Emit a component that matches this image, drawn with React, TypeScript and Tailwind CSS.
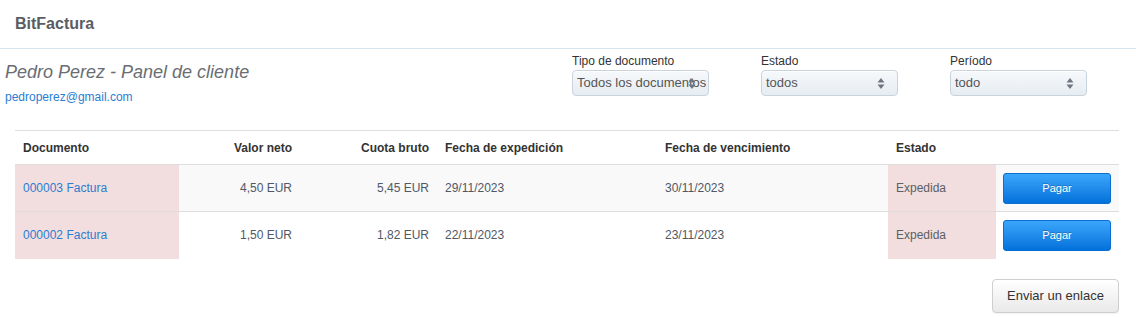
import type { ReactNode } from "react";

const filters = [
    { label: "Tipo de documento", value: "Todos los documentos" },
    { label: "Estado", value: "todos" },
    { label: "Período", value: "todo" },
];

const rows = [
    { doc: "000003 Factura", neto: "4,50 EUR", bruto: "5,45 EUR", exp: "29/11/2023", venc: "30/11/2023", estado: "Expedida" },
    { doc: "000002 Factura", neto: "1,50 EUR", bruto: "1,82 EUR", exp: "22/11/2023", venc: "23/11/2023", estado: "Expedida" },
];

function Arrows() {
    return (
        <svg width="8" height="13" viewBox="0 0 8 13" className="shrink-0">
            <path d="M4 1 L7.5 5.5 L0.5 5.5 Z" fill="#707680" />
            <path d="M4 12 L7.5 7.5 L0.5 7.5 Z" fill="#707680" />
        </svg>
    );
}

function Filter({ label, value }: { label: string; value: string }) {
    return (
        <div className="w-[137px]">
            <div className="text-[12px] leading-[14px] text-[#333]">{label}</div>
            <div className="relative mt-[2px] h-[26px] overflow-hidden rounded-[4px] border border-[#c9d3dd] bg-gradient-to-b from-[#f6f9fc] to-[#e6ecf2] pl-[4px] pr-[14px] shadow-[inset_0_1px_0_#fff]">
                <span className="block whitespace-nowrap text-[13px] leading-[24px] text-[#555]">{value}</span>
                <div className="absolute right-[12px] top-[6px]">
                    <Arrows />
                </div>
            </div>
        </div>
    );
}

function Th({ children, className = "" }: { children?: ReactNode; className?: string }) {
    return <th className={`h-[34px] px-[8px] text-left text-[12px] font-bold text-[#333] ${className}`}>{children}</th>;
}

export default function App() {
    return (
        <div className="min-h-[317px] w-[1136px] bg-white font-['Liberation_Sans',Arial,sans-serif]">
            <header className="flex h-[49px] items-center border-b border-[#d5e4ee] pl-[15px]">
                <span className="text-[16px] font-bold text-[#5a5d63]">BitFactura</span>
            </header>

            <div className="flex">
                <div className="pl-[5px] pt-[12px]">
                    <h1 className="text-[18px] italic leading-[22px] text-[#6a6d72]">Pedro Perez - Panel de cliente</h1>
                    <a className="mt-[7px] block text-[12px] leading-[14px] text-[#2a7dd1]">pedroperez@gmail.com</a>
                </div>
                <div className="ml-auto flex gap-[52px] pr-[49px] pt-[5px]">
                    {filters.map((f) => (
                        <Filter key={f.label} label={f.label} value={f.value} />
                    ))}
                </div>
            </div>

            <div className="mt-[26px] px-[15px]">
                <table className="w-[1104px] table-fixed border-collapse">
                    <colgroup>
                        <col className="w-[164px]" />
                        <col className="w-[121px]" />
                        <col className="w-[137px]" />
                        <col className="w-[220px]" />
                        <col className="w-[231px]" />
                        <col className="w-[108px]" />
                        <col className="w-[123px]" />
                    </colgroup>
                    <thead>
                        <tr className="border-t border-[#ddd]">
                            <Th>Documento</Th>
                            <Th className="text-right">Valor neto</Th>
                            <Th className="text-right">Cuota bruto</Th>
                            <Th>Fecha de expedición</Th>
                            <Th>Fecha de vencimiento</Th>
                            <Th>Estado</Th>
                            <Th />
                        </tr>
                    </thead>
                    <tbody className="text-[12px] text-[#4f5866]">
                        {rows.map((r, i) => (
                            <tr key={r.doc} className={`border-t border-[#ddd] ${i === 0 ? "bg-[#f9f9f9]" : "bg-white"}`}>
                                <td className="h-[47px] bg-[#f2dede] px-[8px]">
                                    <a className="text-[#2a7dd1]">{r.doc}</a>
                                </td>
                                <td className="px-[8px] text-right">{r.neto}</td>
                                <td className="px-[8px] text-right">{r.bruto}</td>
                                <td className="px-[8px]">{r.exp}</td>
                                <td className="px-[8px]">{r.venc}</td>
                                <td className="bg-[#f2dede] px-[8px] text-[#5b5f66]">{r.estado}</td>
                                <td className="pl-[7px] pr-[8px]">
                                    <button
                                        type="button"
                                        className="h-[31px] w-[108px] rounded-[3px] border border-[#0a6fd0] bg-gradient-to-b from-[#3aa6fb] to-[#0071db] text-[11px] text-white [text-shadow:0_-1px_0_rgba(0,0,0,0.25)]"
                                    >
                                        Pagar
                                    </button>
                                </td>
                            </tr>
                        ))}
                    </tbody>
                </table>

                <div className="mt-[20px] flex justify-end pr-[2px]">
                    <button
                        type="button"
                        className="h-[34px] w-[127px] rounded-[4px] border border-[#cfcfcf] bg-gradient-to-b from-white to-[#e9e9e9] text-[13px] text-[#333] shadow-[0_1px_1px_rgba(0,0,0,0.05)]"
                    >
                        Enviar un enlace
                    </button>
                </div>
            </div>
        </div>
    );
}
